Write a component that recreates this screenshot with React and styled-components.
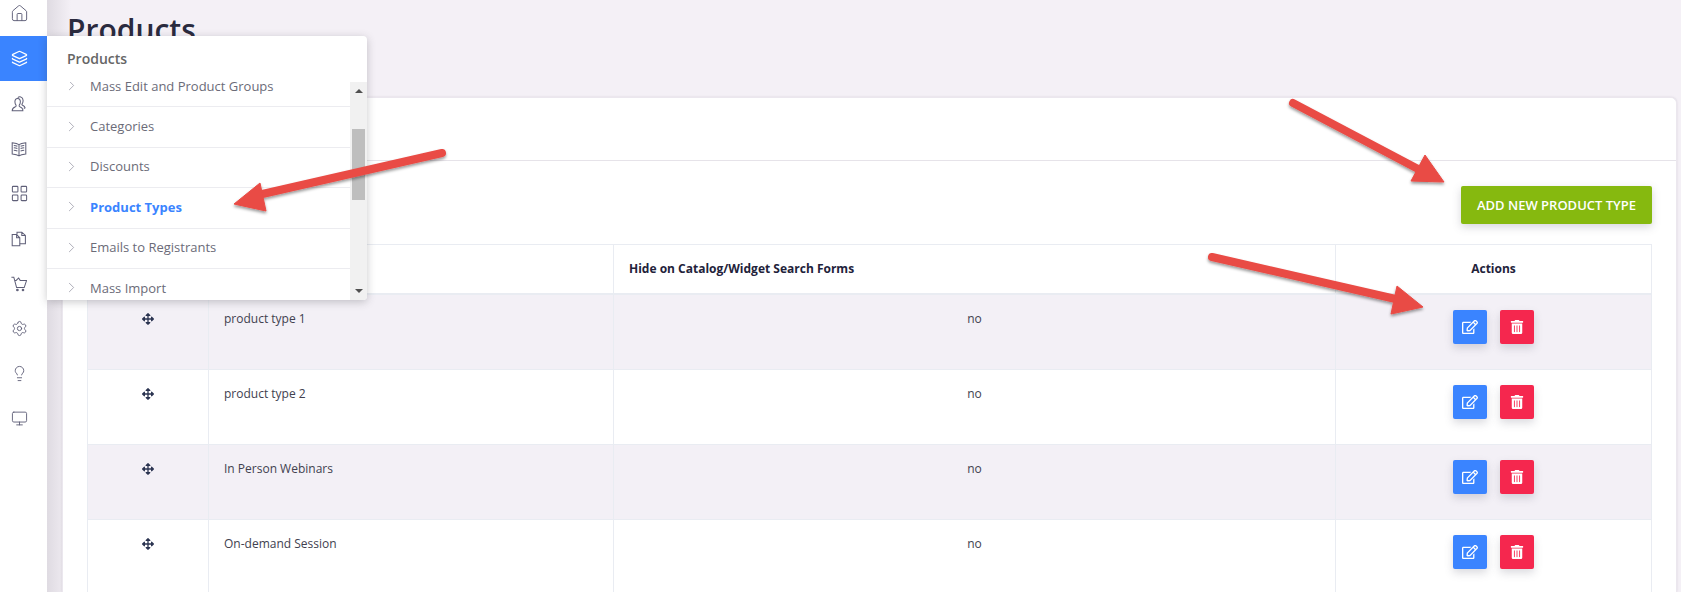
import styled, { createGlobalStyle } from "styled-components"
import { Home, Layers, LayoutGrid, Settings, Lightbulb, Monitor, ChevronRight } from "lucide-react"
import { FaArrowsAlt, FaRegEdit, FaTrashAlt } from "react-icons/fa"

const GlobalStyle = createGlobalStyle`
  html, body {
    margin: 0;
    height: 592px;
    overflow: hidden;
    background: #f4f0f6;
    font-family: "Open Sans", sans-serif;
  }
`
const Page = styled.div`
  position: relative;
  display: flex;
  width: 1681px;
  height: 592px;
  overflow: hidden;
`
const Sidebar = styled.nav`
  flex: 0 0 47px;
  background: #fff;
`
const SideList = styled.div`
  margin-top: -9px;
`
const SideItem = styled.div`
  display: flex;
  align-items: center;
  justify-content: center;
  height: 45px;
  padding-right: 9px;
  background: ${(p) => (p.$active ? "#3a84ff" : "transparent")};
  color: ${(p) => (p.$active ? "#fff" : "#5f5f78")};
`
const Main = styled.main`
  flex: 1;
  min-width: 0;
  padding: 0 4px 0 15px;
  background: linear-gradient(90deg, #dfdbe2 0, #f4f0f6 24px);
`
const Title = styled.h1`
  margin: 0;
  padding: 8px 0 0 5px;
  height: 97px;
  box-sizing: border-box;
  font-size: 30px;
  line-height: 44px;
  font-weight: 600;
  color: #2a2a3e;
`
const Card = styled.section`
  height: 495px;
  background: #fff;
  border: 1px solid #ebe7ee;
  border-bottom: 0;
  border-radius: 6px 6px 0 0;
  box-sizing: border-box;
  box-shadow: 0 0 2px rgba(90, 80, 100, 0.18);
`
const CardHead = styled.div`
  height: 62px;
  border-bottom: 1px solid #e6e3e9;
`
const CardBody = styled.div`
  padding: 25px 24px 0;
`
const Toolbar = styled.div`
  display: flex;
  justify-content: flex-end;
  margin-bottom: 20px;
`
const AddButton = styled.button`
  width: 191px;
  height: 38px;
  padding: 0;
  border: 0;
  border-radius: 2px;
  background: #86b90f;
  color: #fff;
  font-family: inherit;
  font-size: 13px;
  font-weight: 600;
  box-shadow: 0 3px 8px rgba(90, 90, 110, 0.25);
`
const Table = styled.table`
  width: 1564px;
  table-layout: fixed;
  border-collapse: collapse;
  font-size: 12px;
  color: #41414f;
`
const HeadCell = styled.th`
  height: 46px;
  padding: 0 15px 2px;
  border: 1px solid #e9ecf2;
  border-bottom-width: 2px;
  font-size: 12px;
  font-weight: 700;
  color: #22223a;
  text-align: ${(p) => p.$align || "left"};
`
const Row = styled.tr`
  height: 75px;
  background: ${(p) => (p.$shaded ? "#f3f0f6" : "#fff")};
`
const Cell = styled.td`
  padding: 15px 15px 0;
  border: 1px solid #e9ecf2;
  vertical-align: top;
  line-height: 17px;
  text-align: ${(p) => p.$align || "left"};
`
const MoveIcon = styled(FaArrowsAlt)`
  display: block;
  margin: 3px auto 0;
  font-size: 12px;
  color: #2a3350;
`
const Actions = styled.div`
  display: flex;
  justify-content: center;
  gap: 13px;
`
const IconButton = styled.button`
  display: flex;
  align-items: center;
  justify-content: center;
  width: 34px;
  height: 34px;
  padding: 0;
  border: 0;
  border-radius: 2px;
  background: ${(p) => p.$bg};
  color: #fff;
  font-size: ${(p) => p.$size}px;
  box-shadow: 0 4px 8px rgba(90, 90, 110, 0.22);
`
const Flyout = styled.aside`
  position: absolute;
  left: 47px;
  top: 36px;
  width: 320px;
  height: 264px;
  display: flex;
  flex-direction: column;
  background: #fff;
  border-radius: 0 4px 4px 0;
  box-shadow: 0 2px 8px rgba(60, 60, 70, 0.28);
  overflow: hidden;
`
const FlyoutTitle = styled.div`
  flex: 0 0 44px;
  padding: 0 20px;
  font-size: 14px;
  font-weight: 600;
  line-height: 46px;
  color: #666;
`
const FlyoutBody = styled.div`
  flex: 1;
  min-height: 0;
  display: flex;
`
const MenuList = styled.div`
  flex: 1;
  overflow: hidden;
`
const MenuInner = styled.div`
  margin-top: -15px;
`
const MenuItem = styled.div`
  display: flex;
  align-items: center;
  height: 40.4px;
  box-sizing: border-box;
  padding: 0 0 2px 16px;
  border-bottom: 1px solid #ececf0;
  font-size: 13px;
  font-weight: ${(p) => (p.$active ? 700 : 400)};
  color: ${(p) => (p.$active ? "#3a84ff" : "#6b6b78")};
`
const Chevron = styled(ChevronRight)`
  margin-right: 10px;
  color: #8f8f9e;
`
const Scrollbar = styled.div`
  flex: 0 0 17px;
  display: flex;
  flex-direction: column;
  align-items: center;
  background: #f1f1f1;
`
const Arrow = styled.div`
  width: 0;
  height: 0;
  margin-top: ${(p) => (p.$up ? "7px" : "auto")};
  margin-bottom: ${(p) => (p.$up ? "0" : "7px")};
  border-left: 4px solid transparent;
  border-right: 4px solid transparent;
  border-bottom: ${(p) => (p.$up ? "4px solid #505050" : "0")};
  border-top: ${(p) => (p.$up ? "0" : "4px solid #505050")};
`
const Thumb = styled.div`
  width: 13px;
  height: 71px;
  margin-top: 36px;
  background: #bebebe;
`
const Annotations = styled.svg`
  position: absolute;
  inset: 0;
  width: 1681px;
  height: 592px;
  pointer-events: none;
`

const UserIcon = () => (
  <svg width="16" height="16" viewBox="0 0 20 20" fill="none" stroke="currentColor" strokeWidth="1.300">
    <path d="M1.500 18.500c0-3 1.500-4 4-5 1-.5 1.200-1.200.8-2-.9-1-1.400-2.600-1.400-4.200C4.900 4.300 6.500 3 8.300 3c1.800 0 3.400 1.300 3.400 4.300 0 1.600-.5 3.200-1.400 4.200-.4.800-.2 1.500.8 2 1.700.7 3 1.500 3.500 3 .2.800.2 1.600.2 2H1.500z" />
    <path d="M8.500 2.200C9.500 1 11 .8 12.300 1.300c2 .7 3 2.500 2.800 5-.1 1.600-.6 2.700-1.300 3.700-.3.600 0 1.100.7 1.500 1.400.6 2.700 1.300 3 3 .1.500-.3.800-1.500.9" />
  </svg>
)
const BookIcon = () => (
  <svg width="16" height="16" viewBox="0 0 20 20" fill="none" stroke="currentColor" strokeWidth="1.300">
    <path d="M10 4.500C8 3 5 2.500 1.500 2.200v14c3.500.3 6.500.8 8.500 2.300 2-1.500 5-2 8.500-2.300v-14C15 2.500 12 3 10 4.500zM10 4.500v14" />
    <path d="M3.500 5.500c1.500.1 3 .4 4.500 1M3.500 8.500c1.500.1 3 .4 4.500 1M3.500 11.500c1.500.1 3 .4 4.500 1M16.500 5.500c-1.500.1-3 .4-4.500 1M16.500 8.500c-1.500.1-3 .4-4.500 1M16.500 11.500c-1.500.1-3 .4-4.500 1" />
  </svg>
)
const PagesIcon = () => (
  <svg width="16" height="16" viewBox="0 0 20 20" fill="none" stroke="currentColor" strokeWidth="1.300">
    <path d="M7 4.500H1.500v14h9.500V8.500L7 4.500zM7 4.500v4h4" />
    <path d="M7.500 4.500V1.500h6l4.500 4v10.500h-7M13.500 1.500v4h4.500" />
  </svg>
)
const CartIcon = () => (
  <svg width="16" height="16" viewBox="0 0 20 20" fill="none" stroke="currentColor" strokeWidth="1.300">
    <path d="M.5 1.500h3l3.500 13h9.500l3-9h-8l-2-3-3 3H5" />
    <circle cx="8" cy="17.500" r="1" fill="currentColor" />
    <circle cx="15" cy="17.500" r="1" fill="currentColor" />
  </svg>
)

const sideIcons = [
  <Home key="home" size={19} strokeWidth={1.2} />,
  <Layers key="layers" size={17} strokeWidth={1.800} />,
  <UserIcon key="user" />,
  <BookIcon key="book" />,
  <LayoutGrid key="grid" size={19} strokeWidth={1.300} />,
  <PagesIcon key="pages" />,
  <CartIcon key="cart" />,
  <Settings key="settings" size={17} strokeWidth={1.300} />,
  <Lightbulb key="bulb" size={17} strokeWidth={1.300} />,
  <Monitor key="monitor" size={17} strokeWidth={1.300} />,
]

const menuItems = ["Mass Edit and Product Groups", "Categories", "Discounts", "Product Types", "Emails to Registrants", "Mass Import"]
const productTypes = ["product type 1", "product type 2", "In Person Webinars", "On-demand Session"]

const arrows = [
  { line: "442,153 258,195", head: "234,204 260,183 266,211" },
  { line: "1293,103 1420,170", head: "1444,182 1425,155 1411,181" },
  { line: "1212,257 1400,300", head: "1423,307 1397,286 1391,314" },
]

const App = () => {
  return (
    <Page>
      <GlobalStyle />
      <Sidebar>
        <SideList>
          {sideIcons.map((icon, i) => (
            <SideItem key={i} $active={i === 1}>{icon}</SideItem>
          ))}
        </SideList>
      </Sidebar>
      <Main>
        <Title>Products</Title>
        <Card>
          <CardHead />
          <CardBody>
            <Toolbar>
              <AddButton>ADD NEW PRODUCT TYPE</AddButton>
            </Toolbar>
            <Table>
              <colgroup>
                <col style={{ width: 121 }} />
                <col style={{ width: 405 }} />
                <col style={{ width: 722 }} />
                <col style={{ width: 316 }} />
              </colgroup>
              <thead>
                <tr>
                  <HeadCell />
                  <HeadCell>Name</HeadCell>
                  <HeadCell>Hide on Catalog/Widget Search Forms</HeadCell>
                  <HeadCell $align="center">Actions</HeadCell>
                </tr>
              </thead>
              <tbody>
                {productTypes.map((name, i) => (
                  <Row key={name} $shaded={i % 2 === 0}>
                    <Cell><MoveIcon /></Cell>
                    <Cell>{name}</Cell>
                    <Cell $align="center">no</Cell>
                    <Cell>
                      <Actions>
                        <IconButton $bg="#3a84ff" $size={16}><FaRegEdit /></IconButton>
                        <IconButton $bg="#f5274e" $size={14}><FaTrashAlt /></IconButton>
                      </Actions>
                    </Cell>
                  </Row>
                ))}
              </tbody>
            </Table>
          </CardBody>
        </Card>
      </Main>
      <Flyout>
        <FlyoutTitle>Products</FlyoutTitle>
        <FlyoutBody>
          <MenuList>
            <MenuInner>
              {menuItems.map((item) => (
                <MenuItem key={item} $active={item === "Product Types"}>
                  <Chevron size={17} strokeWidth={1} />
                  {item}
                </MenuItem>
              ))}
            </MenuInner>
          </MenuList>
          <Scrollbar>
            <Arrow $up />
            <Thumb />
            <Arrow />
          </Scrollbar>
        </FlyoutBody>
      </Flyout>
      <Annotations viewBox="0 0 1681 592">
        <defs>
          <filter id="arrowShadow" x="-10%" y="-10%" width="120%" height="130%">
            <feDropShadow dx="0" dy="2" stdDeviation="1.5" floodColor="#000" floodOpacity="0.4" />
          </filter>
        </defs>
        {arrows.map((a) => (
          <g key={a.head} filter="url(#arrowShadow)" fill="#e94b45" stroke="#e94b45">
            <polyline points={a.line} strokeWidth="8" strokeLinecap="round" fill="none" />
            <polygon points={a.head} strokeWidth="1" />
          </g>
        ))}
      </Annotations>
    </Page>
  )
}

export default App
